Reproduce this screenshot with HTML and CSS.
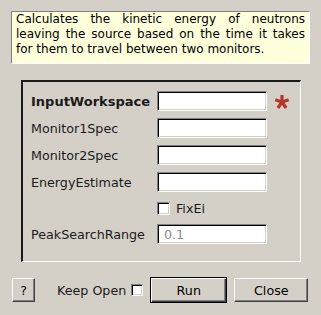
FILE: index.html
```html
<!DOCTYPE html>
<html lang="en">
<head>
    <meta charset="UTF-8">
    <title>GetEi</title>
    <link rel="stylesheet" href="styles.css">
</head>
<body>
    <div class="dialog">
        <p class="summary">Calculates the kinetic energy of neutrons leaving the source based on the time it takes for them to travel between two monitors.</p>

        <div class="group">
            <div class="form">
                <label class="bold" for="inputWorkspace">InputWorkspace</label>
                <input type="text" id="inputWorkspace">
                <svg class="required" width="16" height="16" viewBox="0 0 16 16">
                    <g stroke="#b5362a" stroke-width="3.2">
                        <line x1="8" y1="8" x2="8" y2="1"/>
                        <line x1="8" y1="8" x2="14.7" y2="5.8"/>
                        <line x1="8" y1="8" x2="12.1" y2="14"/>
                        <line x1="8" y1="8" x2="3.9" y2="14"/>
                        <line x1="8" y1="8" x2="1.3" y2="5.8"/>
                    </g>
                </svg>

                <label for="monitor1">Monitor1Spec</label>
                <input type="text" id="monitor1">
                <span></span>

                <label for="monitor2">Monitor2Spec</label>
                <input type="text" id="monitor2">
                <span></span>

                <label for="energy">EnergyEstimate</label>
                <input type="text" id="energy">
                <span></span>

                <span></span>
                <label class="check" for="fixEi"><span class="box"></span>FixEi</label>
                <span></span>

                <label for="peakRange">PeakSearchRange</label>
                <input type="text" id="peakRange" value="0.1" disabled>
                <span></span>
            </div>
        </div>

        <div class="actions">
            <button class="btn help">?</button>
            <span class="keep">Keep Open</span>
            <span class="box"></span>
            <button class="btn run">Run</button>
            <button class="btn close">Close</button>
        </div>
    </div>
</body>
</html>
```

FILE: styles.css
```css
* {
    margin: 0;
    padding: 0;
    box-sizing: border-box;
}

body {
    font-family: "DejaVu Sans", sans-serif;
    font-size: 12px;
    color: #000;
    background-color: #d4d0c8;
}

.dialog {
    width: 321px;
    height: 315px;
    padding: 11px 0 0 11px;
}

.summary {
    width: 299px;
    height: 53px;
    padding: 0 4px;
    line-height: 15px;
    text-align: justify;
    background-color: #ffffdc;
    border: 1px solid;
    border-color: #808080 #ffffff #ffffff #808080;
}

.group {
    width: 280px;
    height: 182px;
    margin: 16px 0 0 10px;
    padding: 9px 0 0 8px;
    border-style: solid;
    border-width: 2px 1px 1px 2px;
    border-color: #1a1a1a #ffffff #ffffff #1a1a1a;
}

.form {
    display: grid;
    grid-template-columns: 126px 110px 23px;
    grid-template-rows: 20px 20px 20px 20px 18px 20px;
    row-gap: 7px;
    align-items: center;
    font-size: 12.7px;
}

.form label {
    color: #1a1a1a;
    white-space: nowrap;
}

.bold {
    font-weight: bold;
    font-size: 13px;
}

input[type="text"] {
    width: 110px;
    height: 20px;
    padding: 0 6px;
    font-family: "DejaVu Sans", sans-serif;
    font-size: 12.7px;
    background-color: #fff;
    border: 1px solid;
    border-color: #808080 #ffffff #ffffff #808080;
    box-shadow: inset 1px 1px #000, inset -1px -1px #d4d0c8;
    outline: none;
}

input[disabled] {
    color: #8a8a8a;
}

.required {
    justify-self: end;
    margin-top: 1px;
}

.check {
    display: flex;
    align-items: center;
    gap: 6px;
}

.box {
    display: inline-block;
    width: 13px;
    height: 13px;
    background-color: #fff;
    border: 1px solid;
    border-color: #808080 #ffffff #ffffff #808080;
    box-shadow: inset 1px 1px #000, inset -1px -1px #d4d0c8;
}

.actions {
    display: flex;
    align-items: center;
    margin-top: 15px;
    padding-left: 1px;
    font-size: 12.7px;
}

.btn {
    height: 24px;
    font-family: "DejaVu Sans", sans-serif;
    font-size: 12.7px;
    color: #000;
    background-color: #d4d0c8;
    border: 1px solid;
    border-color: #ffffff #404040 #404040 #ffffff;
    box-shadow: inset -1px -1px #808080;
}

.help {
    width: 23px;
}

.keep {
    margin-left: 22px;
    margin-right: 5px;
    color: #1a1a1a;
}

.actions .box {
    width: 12px;
    height: 12px;
}

.run {
    width: 77px;
    height: 26px;
    margin-left: 7px;
    border-color: #000;
    box-shadow: inset 1px 1px #fff, inset -1px -1px #404040, inset -2px -2px #808080;
}

.close {
    width: 74px;
    margin-left: 7px;
}
```
